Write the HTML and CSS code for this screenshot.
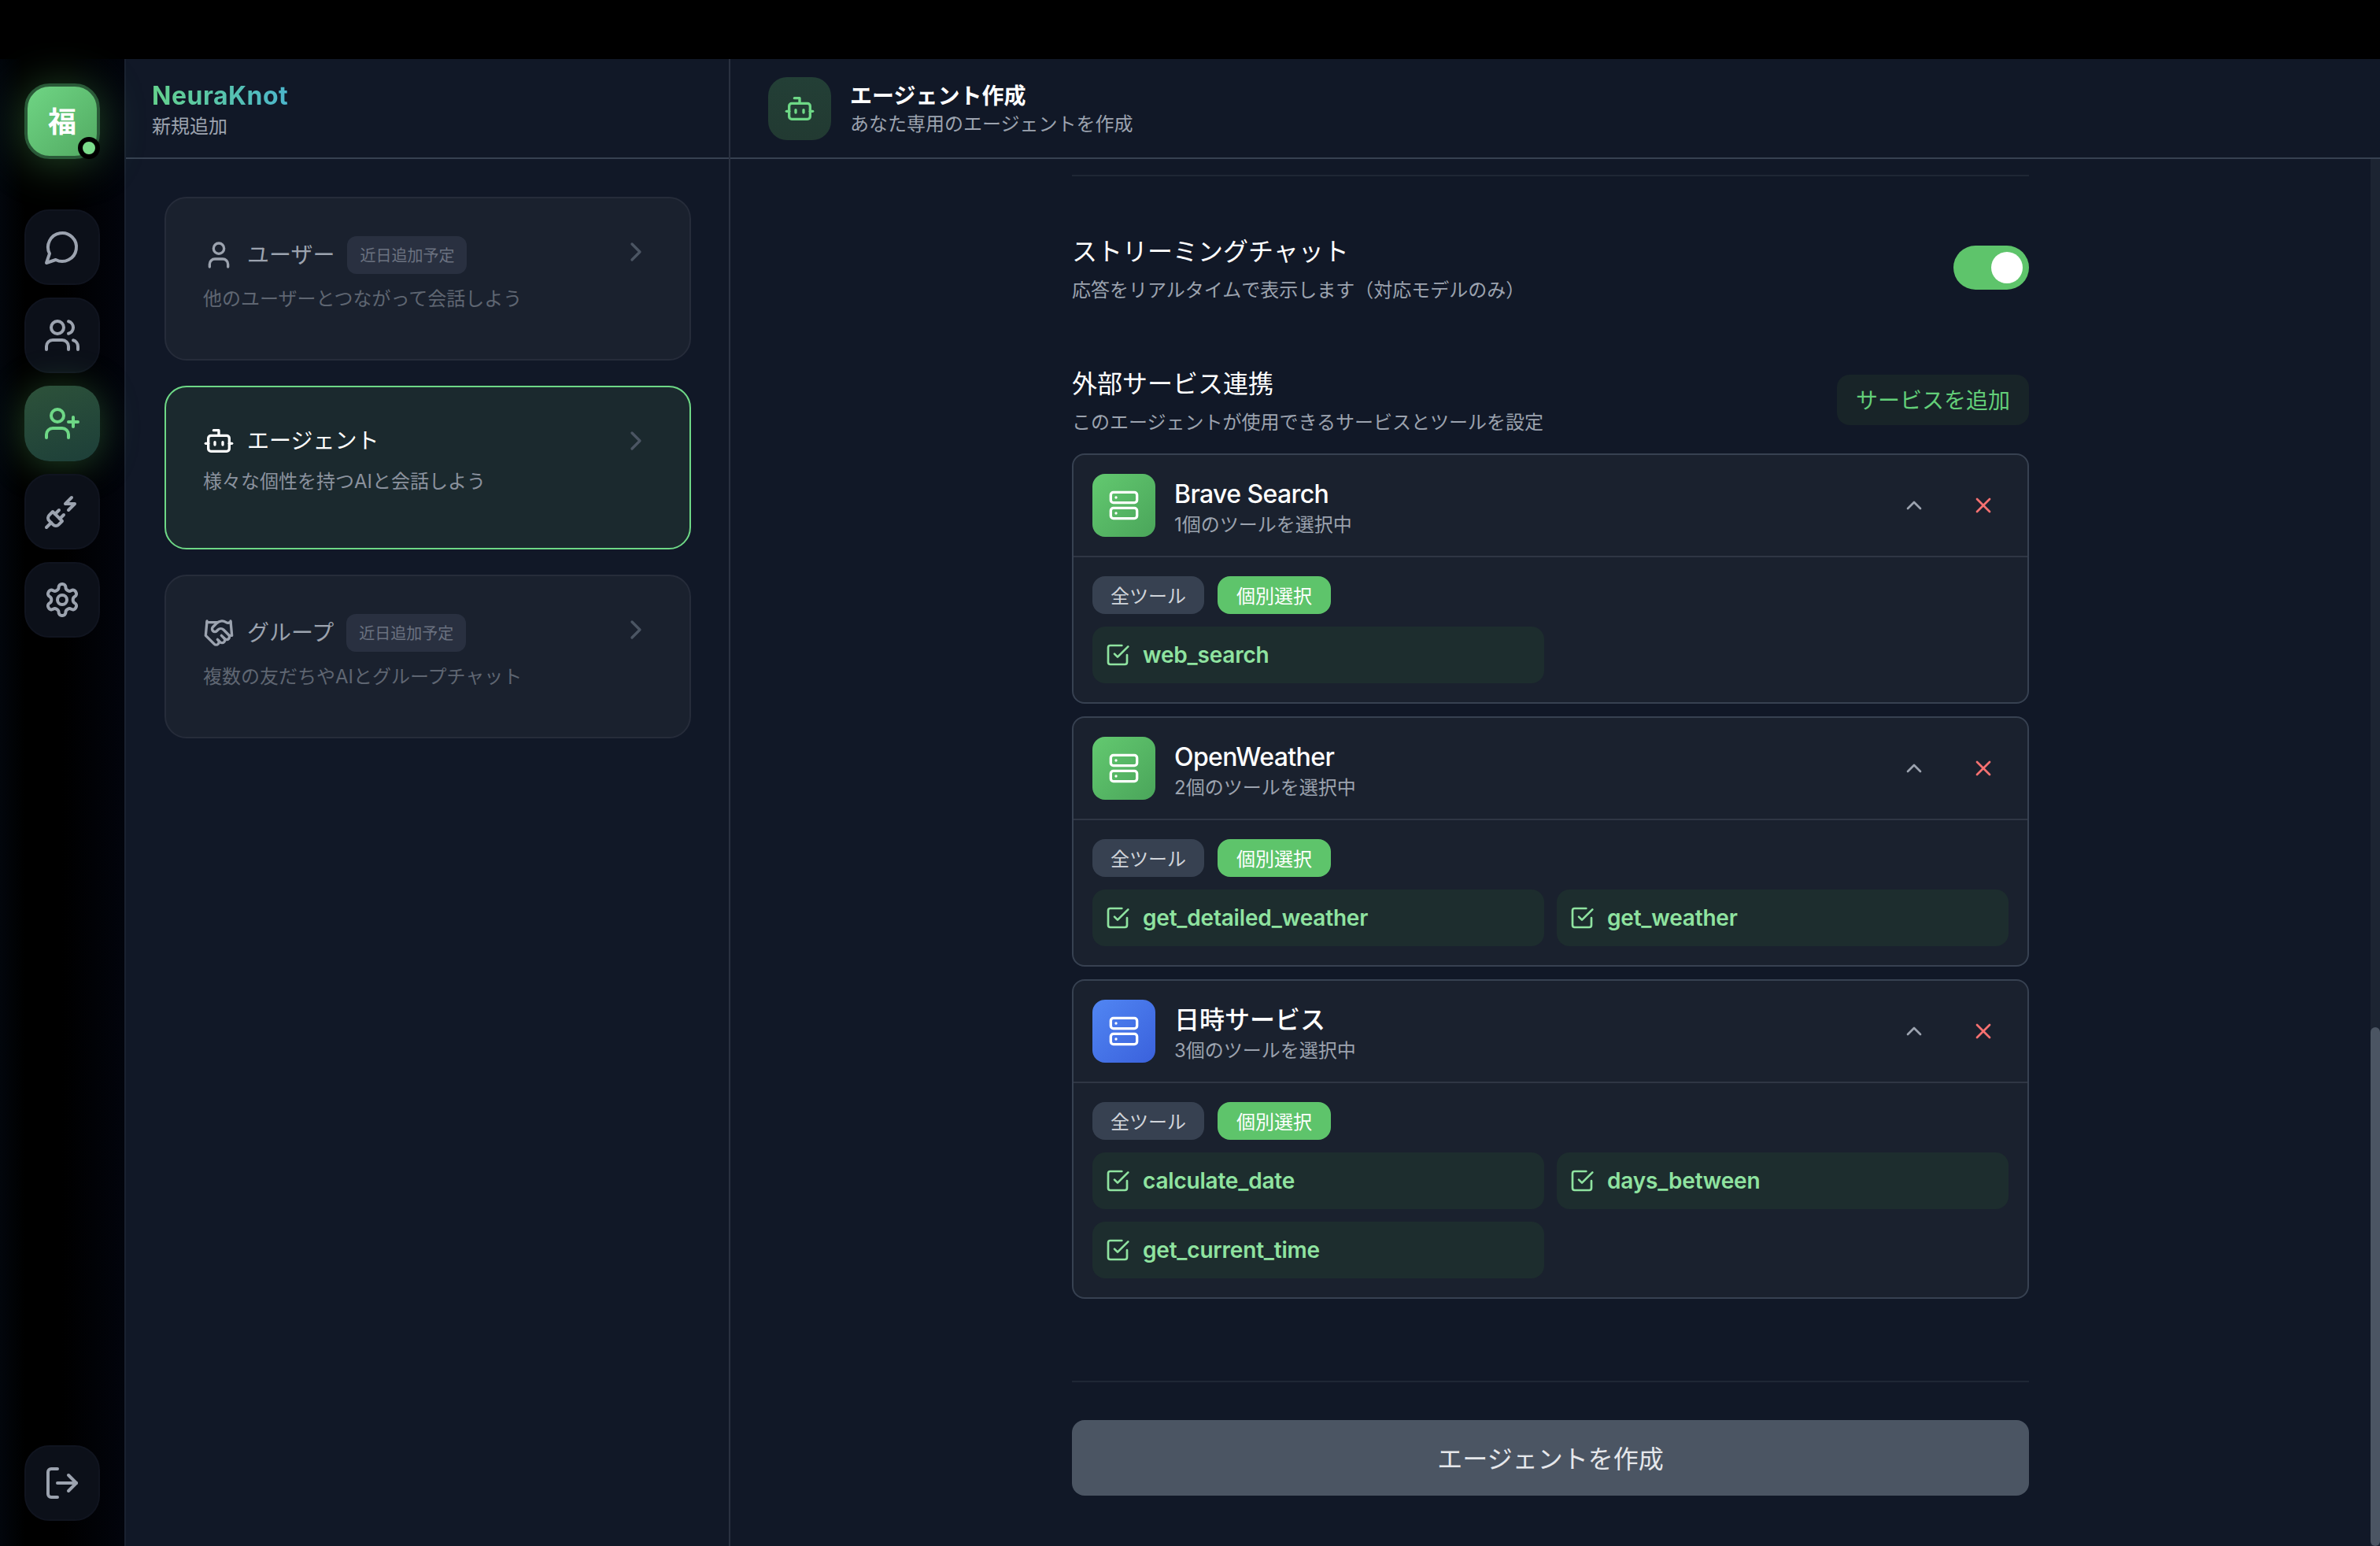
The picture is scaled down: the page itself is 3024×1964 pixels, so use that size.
FILE: index.html
```html
<!DOCTYPE html>
<html lang="ja">
<head>
    <meta charset="UTF-8">
    <meta name="viewport" content="width=device-width, initial-scale=1.0">
    <title>エージェント作成</title>
    <link rel="stylesheet" href="styles.css">
</head>
<body>
    <svg class="sprite" xmlns="http://www.w3.org/2000/svg">
        <symbol id="i-chat" viewBox="0 0 24 24"><path d="M7.9 20A9 9 0 1 0 4 16.1L2 22Z"/></symbol>
        <symbol id="i-users" viewBox="0 0 24 24"><path d="M16 21v-2a4 4 0 0 0-4-4H6a4 4 0 0 0-4 4v2"/><circle cx="9" cy="7" r="4"/><path d="M22 21v-2a4 4 0 0 0-3-3.87"/><path d="M16 3.13a4 4 0 0 1 0 7.75"/></symbol>
        <symbol id="i-user-plus" viewBox="0 0 24 24"><path d="M16 21v-2a4 4 0 0 0-4-4H6a4 4 0 0 0-4 4v2"/><circle cx="9" cy="7" r="4"/><path d="M19 8v6"/><path d="M22 11h-6"/></symbol>
        <symbol id="i-plug" viewBox="0 0 24 24"><path d="M6.3 20.3a2.4 2.4 0 0 0 3.4 0L12 18l-6-6-2.3 2.3a2.4 2.4 0 0 0 0 3.4Z"/><path d="m2 22 3-3"/><path d="M7.5 13.5 10 11"/><path d="M10.5 16.5 13 14"/><path d="m18 3-4 4h6l-4 4"/></symbol>
        <symbol id="i-gear" viewBox="0 0 24 24"><path d="M12.22 2h-.44a2 2 0 0 0-2 2v.18a2 2 0 0 1-1 1.73l-.43.25a2 2 0 0 1-2 0l-.15-.08a2 2 0 0 0-2.73.73l-.22.38a2 2 0 0 0 .73 2.73l.15.1a2 2 0 0 1 1 1.72v.51a2 2 0 0 1-1 1.74l-.15.09a2 2 0 0 0-.73 2.73l.22.38a2 2 0 0 0 2.73.73l.15-.08a2 2 0 0 1 2 0l.43.25a2 2 0 0 1 1 1.73V20a2 2 0 0 0 2 2h.44a2 2 0 0 0 2-2v-.18a2 2 0 0 1 1-1.73l.43-.25a2 2 0 0 1 2 0l.15.08a2 2 0 0 0 2.73-.73l.22-.39a2 2 0 0 0-.73-2.73l-.15-.08a2 2 0 0 1-1-1.74v-.5a2 2 0 0 1 1-1.74l.15-.09a2 2 0 0 0 .73-2.73l-.22-.38a2 2 0 0 0-2.73-.73l-.15.08a2 2 0 0 1-2 0l-.43-.25a2 2 0 0 1-1-1.73V4a2 2 0 0 0-2-2z"/><circle cx="12" cy="12" r="3"/></symbol>
        <symbol id="i-logout" viewBox="0 0 24 24"><path d="M9 21H5a2 2 0 0 1-2-2V5a2 2 0 0 1 2-2h4"/><path d="m16 17 5-5-5-5"/><path d="M21 12H9"/></symbol>
        <symbol id="i-user" viewBox="0 0 24 24"><path d="M19 21v-2a4 4 0 0 0-4-4H9a4 4 0 0 0-4 4v2"/><circle cx="12" cy="7" r="4"/></symbol>
        <symbol id="i-bot" viewBox="0 0 24 24"><path d="M12 8V4H8"/><rect x="4" y="8" width="16" height="12" rx="2"/><path d="M2 14h2"/><path d="M20 14h2"/><path d="M15 13v2"/><path d="M9 13v2"/></symbol>
        <symbol id="i-handshake" viewBox="0 0 24 24"><path d="m11 17 2 2a1 1 0 1 0 3-3"/><path d="m14 14 2.5 2.5a1 1 0 1 0 3-3l-3.88-3.88a3 3 0 0 0-4.24 0l-.88.88a1 1 0 1 1-3-3l2.81-2.81a5.79 5.79 0 0 1 7.06-.87l.47.28a2 2 0 0 0 1.42.25L21 4"/><path d="m21 3 1 11h-2"/><path d="M3 3 2 14l6.5 6.5a1 1 0 1 0 3-3"/><path d="M3 4h8"/></symbol>
        <symbol id="i-right" viewBox="0 0 24 24"><path d="m9 18 6-6-6-6"/></symbol>
        <symbol id="i-up" viewBox="0 0 24 24"><path d="m18 15-6-6-6 6"/></symbol>
        <symbol id="i-x" viewBox="0 0 24 24"><path d="M18 6 6 18"/><path d="m6 6 12 12"/></symbol>
        <symbol id="i-server" viewBox="0 0 24 24"><rect x="2" y="2" width="20" height="8" rx="2"/><rect x="2" y="14" width="20" height="8" rx="2"/><path d="M6 6h.01"/><path d="M6 18h.01"/></symbol>
        <symbol id="i-check" viewBox="0 0 24 24"><path d="M21 12v7a2 2 0 0 1-2 2H5a2 2 0 0 1-2-2V5a2 2 0 0 1 2-2h11"/><path d="m9 11 3 3L22 4"/></symbol>
    </svg>

    <div class="topbar"></div>

    <div class="app">
        <nav class="rail">
            <div class="avatar">福<span class="status-dot"></span></div>
            <a class="rail-btn"><svg class="icon icon-48"><use href="#i-chat"/></svg></a>
            <a class="rail-btn"><svg class="icon icon-48"><use href="#i-users"/></svg></a>
            <a class="rail-btn active"><svg class="icon icon-48"><use href="#i-user-plus"/></svg></a>
            <a class="rail-btn"><svg class="icon icon-48"><use href="#i-plug"/></svg></a>
            <a class="rail-btn"><svg class="icon icon-48"><use href="#i-gear"/></svg></a>
            <a class="rail-btn logout"><svg class="icon icon-48"><use href="#i-logout"/></svg></a>
        </nav>

        <aside class="panel">
            <header class="panel-header">
                <div class="brand">NeuraKnot</div>
                <div class="brand-sub">新規追加</div>
            </header>
            <div class="panel-body">
                <div class="type-card disabled">
                    <div class="type-row">
                        <div class="type-left">
                            <svg class="icon icon-40"><use href="#i-user"/></svg>
                            <span class="type-title">ユーザー</span>
                            <span class="soon">近日追加予定</span>
                        </div>
                        <svg class="icon icon-40 chevron"><use href="#i-right"/></svg>
                    </div>
                    <p class="type-desc">他のユーザーとつながって会話しよう</p>
                </div>
                <div class="type-card selected">
                    <div class="type-row">
                        <div class="type-left">
                            <svg class="icon icon-40"><use href="#i-bot"/></svg>
                            <span class="type-title">エージェント</span>
                        </div>
                        <svg class="icon icon-40 chevron"><use href="#i-right"/></svg>
                    </div>
                    <p class="type-desc">様々な個性を持つAIと会話しよう</p>
                </div>
                <div class="type-card disabled">
                    <div class="type-row">
                        <div class="type-left">
                            <svg class="icon icon-40"><use href="#i-handshake"/></svg>
                            <span class="type-title">グループ</span>
                            <span class="soon">近日追加予定</span>
                        </div>
                        <svg class="icon icon-40 chevron"><use href="#i-right"/></svg>
                    </div>
                    <p class="type-desc">複数の友だちやAIとグループチャット</p>
                </div>
            </div>
        </aside>

        <main class="main">
            <header class="main-header">
                <div class="main-tile"><svg class="icon icon-40"><use href="#i-bot"/></svg></div>
                <div>
                    <h1 class="main-title">エージェント作成</h1>
                    <div class="main-sub">あなた専用のエージェントを作成</div>
                </div>
            </header>
            <div class="main-scroll">
                <div class="form-area">
                    <div class="form">
                        <hr class="rule rule-top">

                        <section class="setting-row streaming">
                            <div>
                                <h2 class="setting-title">ストリーミングチャット</h2>
                                <p class="setting-sub">応答をリアルタイムで表示します（対応モデルのみ）</p>
                            </div>
                            <div class="toggle"><span class="knob"></span></div>
                        </section>

                        <section class="setting-row services-head">
                            <div>
                                <h2 class="setting-title">外部サービス連携</h2>
                                <p class="setting-sub">このエージェントが使用できるサービスとツールを設定</p>
                            </div>
                            <button class="add-btn" type="button">サービスを追加</button>
                        </section>

                        <div class="service-list">
                            <div class="service">
                                <div class="service-head">
                                    <div class="service-tile"><svg class="icon icon-40"><use href="#i-server"/></svg></div>
                                    <div class="service-info">
                                        <div class="service-name">Brave Search</div>
                                        <div class="service-count">1個のツールを選択中</div>
                                    </div>
                                    <svg class="icon icon-32 collapse"><use href="#i-up"/></svg>
                                    <svg class="icon icon-32 remove"><use href="#i-x"/></svg>
                                </div>
                                <div class="service-body">
                                    <div class="mode-pills">
                                        <span class="pill">全ツール</span>
                                        <span class="pill on">個別選択</span>
                                    </div>
                                    <div class="tools">
                                        <div class="tool"><svg class="icon icon-32"><use href="#i-check"/></svg>web_search</div>
                                    </div>
                                </div>
                            </div>

                            <div class="service">
                                <div class="service-head">
                                    <div class="service-tile"><svg class="icon icon-40"><use href="#i-server"/></svg></div>
                                    <div class="service-info">
                                        <div class="service-name">OpenWeather</div>
                                        <div class="service-count">2個のツールを選択中</div>
                                    </div>
                                    <svg class="icon icon-32 collapse"><use href="#i-up"/></svg>
                                    <svg class="icon icon-32 remove"><use href="#i-x"/></svg>
                                </div>
                                <div class="service-body">
                                    <div class="mode-pills">
                                        <span class="pill">全ツール</span>
                                        <span class="pill on">個別選択</span>
                                    </div>
                                    <div class="tools">
                                        <div class="tool"><svg class="icon icon-32"><use href="#i-check"/></svg>get_detailed_weather</div>
                                        <div class="tool"><svg class="icon icon-32"><use href="#i-check"/></svg>get_weather</div>
                                    </div>
                                </div>
                            </div>

                            <div class="service">
                                <div class="service-head">
                                    <div class="service-tile blue"><svg class="icon icon-40"><use href="#i-server"/></svg></div>
                                    <div class="service-info">
                                        <div class="service-name ja">日時サービス</div>
                                        <div class="service-count">3個のツールを選択中</div>
                                    </div>
                                    <svg class="icon icon-32 collapse"><use href="#i-up"/></svg>
                                    <svg class="icon icon-32 remove"><use href="#i-x"/></svg>
                                </div>
                                <div class="service-body">
                                    <div class="mode-pills">
                                        <span class="pill">全ツール</span>
                                        <span class="pill on">個別選択</span>
                                    </div>
                                    <div class="tools">
                                        <div class="tool"><svg class="icon icon-32"><use href="#i-check"/></svg>calculate_date</div>
                                        <div class="tool"><svg class="icon icon-32"><use href="#i-check"/></svg>days_between</div>
                                        <div class="tool"><svg class="icon icon-32"><use href="#i-check"/></svg>get_current_time</div>
                                    </div>
                                </div>
                            </div>
                        </div>

                        <hr class="rule rule-bottom">
                        <button class="submit-btn" type="button">エージェントを作成</button>
                    </div>
                </div>
                <div class="scrollbar"><div class="scrollbar-thumb"></div></div>
            </div>
        </main>
    </div>
</body>
</html>
```

FILE: styles.css
```css
* {
    box-sizing: border-box;
}

html, body {
    margin: 0;
    height: 100%;
}

body {
    display: flex;
    flex-direction: column;
    height: 1964px;
    overflow: hidden;
    background: #000;
    color: #fff;
    font-family: Inter, "Noto Sans CJK JP", sans-serif;
}

h1, h2, p {
    margin: 0;
    font-weight: 400;
}

.sprite {
    display: none;
}

.icon {
    flex: none;
    fill: none;
    stroke: currentColor;
    stroke-width: 2;
    stroke-linecap: round;
    stroke-linejoin: round;
}

.icon-48 { width: 48px; height: 48px; }
.icon-40 { width: 40px; height: 40px; }
.icon-32 { width: 32px; height: 32px; }

.topbar {
    height: 75px;
    flex: none;
    background: #000;
}

.app {
    flex: 1;
    display: flex;
    min-height: 0;
    background: #111827;
}

/* left rail */
.rail {
    width: 160px;
    flex: none;
    display: flex;
    flex-direction: column;
    align-items: center;
    gap: 16px;
    padding: 31px 0 32px;
    background: linear-gradient(90deg, #02060c 0%, #000 20%, #000 50%, #02040c 100%);
    border-right: 2px solid #1a2130;
}

.avatar {
    position: relative;
    width: 96px;
    height: 96px;
    margin-bottom: 48px;
    padding-bottom: 4px;
    display: flex;
    align-items: center;
    justify-content: center;
    border: 4px solid #2a5a38;
    border-radius: 32px;
    background: linear-gradient(135deg, #6fd584, #52aa62);
    box-shadow: 0 4px 56px rgba(94, 196, 107, 0.38);
    font-size: 36px;
    font-weight: 700;
}

.status-dot {
    position: absolute;
    right: -4px;
    bottom: -4px;
    width: 28px;
    height: 28px;
    border: 6px solid #000;
    border-radius: 50%;
    background: #7bdc8c;
}

.rail-btn {
    width: 96px;
    height: 96px;
    flex: none;
    display: flex;
    align-items: center;
    justify-content: center;
    border: 2px solid #10141f;
    border-radius: 32px;
    background: #0c1019;
    color: #9ca3af;
}

.rail-btn.active {
    border: none;
    background: linear-gradient(160deg, #2d523a, #1d3f39);
    box-shadow: 0 4px 48px rgba(94, 196, 107, 0.34);
    color: #6ed886;
}

.rail-btn.logout {
    margin-top: auto;
}

/* middle panel */
.panel {
    width: 768px;
    flex: none;
    display: flex;
    flex-direction: column;
    border-right: 2px solid #2a3140;
}

.panel-header {
    height: 127px;
    flex: none;
    padding: 24px 32px 0 33px;
    border-bottom: 2px solid #374151;
}

.brand {
    width: max-content;
    font-size: 32px;
    line-height: 46px;
    font-weight: 700;
    letter-spacing: 0.5px;
    background: linear-gradient(90deg, #64d28c, #4cb6cc);
    -webkit-background-clip: text;
    background-clip: text;
    color: transparent;
}

.brand-sub {
    margin-top: -2px;
    font-size: 24px;
    line-height: 36px;
    color: #9ca3af;
}

.panel-body {
    display: flex;
    flex-direction: column;
    gap: 32px;
    padding: 48px 48px 0 49px;
}

.type-card {
    height: 208px;
    padding: 48px 48px 48px 47px;
    border: 2px solid #262c3a;
    border-radius: 28px;
    background: #1a212e;
}

.type-card.selected {
    border-color: #6ed886;
    background: #1b292e;
}

.type-row {
    display: flex;
    justify-content: space-between;
    align-items: flex-start;
}

.type-left {
    display: flex;
    align-items: center;
    gap: 16px;
    color: #9ca3af;
}

.selected .type-left {
    color: #fff;
}

.type-title {
    font-size: 28px;
    line-height: 40px;
}

.soon {
    height: 48px;
    padding: 0 16px 2px;
    display: flex;
    align-items: center;
    border-radius: 12px;
    background: #293040;
    color: #6b7280;
    font-size: 20px;
}

.chevron {
    color: #4b5563;
}

.type-desc {
    margin-top: 14px;
    font-size: 24px;
    line-height: 36px;
    color: #5f6672;
}

.selected .type-desc {
    color: #8b929e;
}

/* main column */
.main {
    flex: 1;
    min-width: 0;
    display: flex;
    flex-direction: column;
}

.main-header {
    height: 127px;
    flex: none;
    display: flex;
    align-items: center;
    gap: 24px;
    padding: 0 48px;
    border-bottom: 2px solid #374151;
}

.main-tile {
    width: 80px;
    height: 80px;
    display: flex;
    align-items: center;
    justify-content: center;
    border-radius: 24px;
    background: linear-gradient(180deg, #233f36, #223a32);
    color: #6ed886;
}

.main-title {
    font-size: 28px;
    line-height: 40px;
    font-weight: 700;
}

.main-sub {
    font-size: 24px;
    line-height: 32px;
    color: #9ca3af;
}

.main-scroll {
    flex: 1;
    min-height: 0;
    display: flex;
}

.form-area {
    flex: 1;
    min-width: 0;
    display: flex;
    justify-content: center;
}

.form {
    width: 1216px;
}

.rule {
    height: 2px;
    margin: 0;
    border: none;
    background: #1f2735;
}

.rule-top {
    margin-top: 20px;
}

.setting-row {
    display: flex;
    justify-content: space-between;
    align-items: flex-start;
}

.streaming {
    margin-top: 72px;
}

.services-head {
    margin-top: 77px;
}

.setting-title {
    font-size: 32px;
    line-height: 48px;
}

.setting-sub {
    margin-top: 7px;
    font-size: 24px;
    line-height: 36px;
    color: #9ca3af;
}

.toggle {
    width: 96px;
    height: 56px;
    margin-top: 16px;
    display: flex;
    align-items: center;
    justify-content: flex-end;
    padding-right: 8px;
    border-radius: 28px;
    background: #5ec46b;
}

.knob {
    width: 40px;
    height: 40px;
    border-radius: 50%;
    background: #fff;
}

.add-btn {
    height: 64px;
    margin-top: 12px;
    padding: 0 24px 2px;
    border: none;
    border-radius: 16px;
    background: #182428;
    color: #63cf79;
    font-family: inherit;
    font-size: 28px;
}

.service-list {
    display: flex;
    flex-direction: column;
    gap: 16px;
    margin-top: 21px;
}

.service {
    border: 2px solid #374151;
    border-radius: 16px;
    background: #1a212e;
}

.service-head {
    display: flex;
    align-items: center;
    padding: 24px;
    border-bottom: 2px solid #2f3644;
}

.service-tile {
    width: 80px;
    height: 80px;
    flex: none;
    display: flex;
    align-items: center;
    justify-content: center;
    margin-right: 24px;
    border-radius: 16px;
    background: linear-gradient(135deg, #63c970, #4aa55a);
}

.service-tile.blue {
    background: linear-gradient(135deg, #5186f3, #3a61dc);
}

.service-info {
    flex: 1;
    padding-top: 4px;
}

.service-name {
    font-size: 32px;
    line-height: 44px;
    font-weight: 500;
    letter-spacing: -0.6px;
}

.service-name.ja {
    letter-spacing: 0;
}

.service-count {
    margin-top: 1px;
    font-size: 24px;
    line-height: 31px;
    color: #9ca3af;
}

.collapse {
    margin-right: 56px;
    color: #9ca3af;
}

.remove {
    margin-right: 16px;
    color: #f87171;
}

.service-body {
    display: flex;
    flex-direction: column;
    gap: 16px;
    padding: 24px;
}

.mode-pills {
    display: flex;
    gap: 17px;
}

.pill {
    height: 48px;
    padding: 0 23px 2px;
    display: flex;
    align-items: center;
    border-radius: 16px;
    background: #374151;
    color: #d1d5db;
    font-size: 24px;
}

.pill.on {
    padding: 0 24px 2px;
    background: #5ec46b;
    color: #fff;
}

.tools {
    display: grid;
    grid-template-columns: 1fr 1fr;
    gap: 16px;
}

.tool {
    height: 72px;
    display: flex;
    align-items: center;
    gap: 16px;
    padding: 0 16px;
    border-radius: 16px;
    background: #1d2d2e;
    color: #8fe3a0;
    font-size: 28px;
    font-weight: 600;
    letter-spacing: -0.2px;
}

.rule-bottom {
    margin-top: 104px;
}

.submit-btn {
    display: block;
    width: 100%;
    height: 96px;
    margin-top: 48px;
    padding: 0 0 3px;
    border: none;
    border-radius: 16px;
    background: #4b5563;
    color: #e5e7eb;
    font-family: inherit;
    font-size: 32px;
}

.scrollbar {
    width: 12px;
    flex: none;
    display: flex;
    flex-direction: column;
    justify-content: flex-end;
    background: #1c2432;
}

.scrollbar-thumb {
    height: 659px;
    border-radius: 6px;
    background: #4b5563;
}
```
